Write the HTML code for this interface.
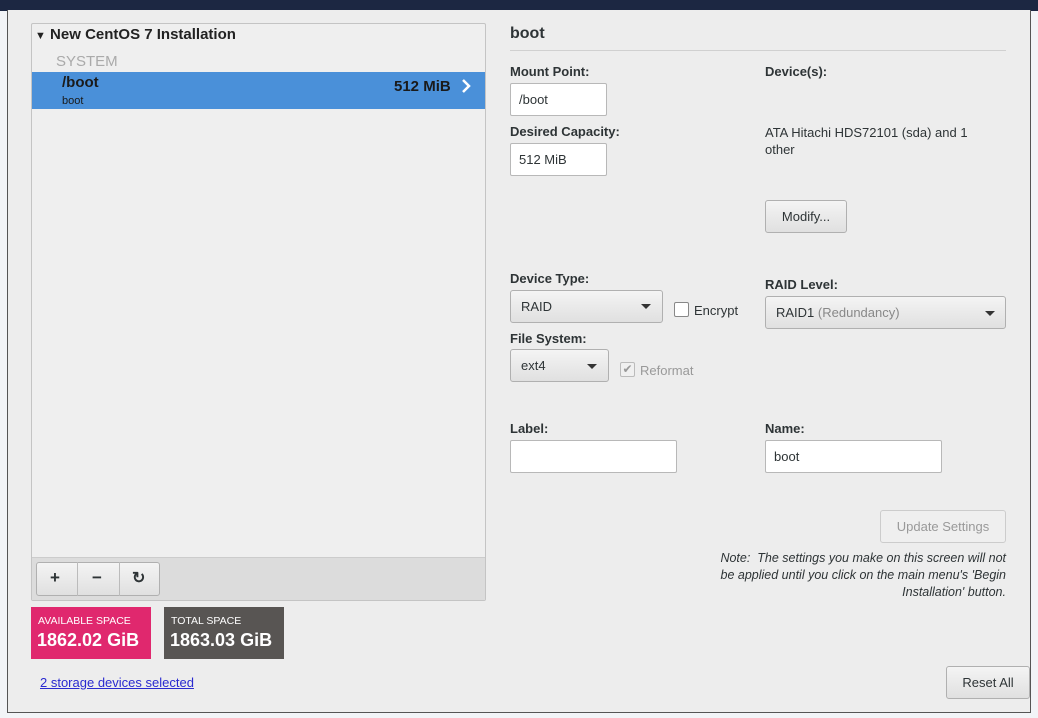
<!DOCTYPE html>
<html><head><meta charset="utf-8"><style>
*{box-sizing:border-box;margin:0;padding:0}
body{width:1038px;height:718px;overflow:hidden;background:#f2f4f7;font-family:"Liberation Sans",sans-serif;font-size:13px;color:#2e3436;position:relative}
.top{position:absolute;left:0;top:0;width:1038px;height:11px;background:#1c2742}
.win{position:absolute;left:7px;top:10px;width:1024px;height:703px;background:#ededed;border:1px solid #555;border-top:none}
.a{position:absolute;white-space:nowrap}
.lbl{font-weight:bold;font-size:13px;color:#2e3436}
.inp{position:absolute;background:#fff;border:1px solid #b8b8b8;border-radius:2px;padding-left:8px;font-size:13px;display:flex;align-items:center}
.btn{position:absolute;background:linear-gradient(#f4f4f4,#e0e0e0);border:1px solid #b0b0b0;border-radius:3px;display:flex;align-items:center;font-size:13px;white-space:nowrap}
.arr{position:absolute;width:0;height:0;border-left:5px solid transparent;border-right:5px solid transparent;border-top:5px solid #333}
</style></head><body>
<div class="top"></div>
<div class="win"></div>
<div class="a" style="left:31px;top:23px;width:455px;height:578px;border:1px solid #c4c4c4;border-radius:2px;background:#efefef"></div>
<div class="a" style="left:35px;top:26px;font-weight:bold;font-size:15px;color:#222"><span style="font-size:11px">▼</span> New CentOS 7 Installation</div>
<div class="a" style="left:56px;top:53px;font-size:15px;color:#aaa">SYSTEM</div>
<div class="a" style="left:32px;top:72px;width:453px;height:37px;background:#4a90d9"></div>
<div class="a" style="left:62px;top:74px;font-weight:bold;font-size:15px;color:#1a1a1a">/boot</div>
<div class="a" style="left:62px;top:95px;font-size:11px;color:#1a1a1a">boot</div>
<div class="a" style="left:394px;top:78px;font-weight:bold;font-size:15px;color:#1a1a1a">512 MiB</div>
<svg class="a" style="left:461px;top:79px" width="10" height="14"><path d="M2 1 L8 7 L2 13" stroke="#fff" stroke-width="2.5" fill="none"/></svg>
<div class="a" style="left:32px;top:557px;width:453px;height:43px;background:#dcdcdc;border-top:1px solid #ccc"></div>
<div class="btn" style="left:36px;top:562px;width:124px;height:34px;padding:0"></div>
<div class="a" style="left:77px;top:562px;width:1px;height:34px;background:#bbb"></div>
<div class="a" style="left:119px;top:562px;width:1px;height:34px;background:#bbb"></div>
<div class="a" style="left:50px;top:568px;font-weight:bold;font-size:17px">+</div>
<div class="a" style="left:92px;top:568px;font-weight:bold;font-size:17px">−</div>
<div class="a" style="left:132px;top:568px;font-weight:bold;font-size:16px">↻</div>
<div class="a" style="left:31px;top:607px;width:120px;height:52px;background:#e0286e;color:#fff">
<div style="position:absolute;left:7px;top:8px;font-size:10.5px">AVAILABLE SPACE</div>
<div style="position:absolute;left:6px;top:23px;font-size:18px;font-weight:bold;white-space:nowrap">1862.02 GiB</div></div>
<div class="a" style="left:164px;top:607px;width:120px;height:52px;background:#585553;color:#fff">
<div style="position:absolute;left:7px;top:8px;font-size:10.5px">TOTAL SPACE</div>
<div style="position:absolute;left:6px;top:23px;font-size:18px;font-weight:bold;white-space:nowrap">1863.03 GiB</div></div>
<div class="a" style="left:40px;top:675px;font-size:13px;color:#2a2ad0;text-decoration:underline">2 storage devices selected</div>
<div class="a lbl" style="left:510px;top:25px;font-size:16px">boot</div>
<div class="a" style="left:510px;top:50px;width:496px;height:1px;background:#d0d0d0"></div>
<div class="a lbl" style="left:510px;top:64px">Mount Point:</div>
<div class="inp" style="left:510px;top:83px;width:97px;height:33px">/boot</div>
<div class="a lbl" style="left:510px;top:124px">Desired Capacity:</div>
<div class="inp" style="left:510px;top:143px;width:97px;height:33px">512 MiB</div>
<div class="a lbl" style="left:765px;top:64px">Device(s):</div>
<div class="a" style="left:765px;top:124px;width:220px;line-height:17px;white-space:normal">ATA Hitachi HDS72101 (sda) and 1 other</div>
<div class="btn" style="left:765px;top:200px;width:82px;height:33px;justify-content:center">Modify...</div>
<div class="a lbl" style="left:510px;top:271px">Device Type:</div>
<div class="btn" style="left:510px;top:290px;width:153px;height:33px;padding-left:10px">RAID</div><div class="arr" style="left:641px;top:304px"></div>
<div class="a" style="left:674px;top:302px;width:15px;height:15px;border:1px solid #888;border-radius:2px;background:#fff"></div>
<div class="a" style="left:694px;top:303px">Encrypt</div>
<div class="a lbl" style="left:765px;top:277px">RAID Level:</div>
<div class="btn" style="left:765px;top:296px;width:241px;height:33px;padding-left:10px">RAID1&nbsp;<span style="color:#888">(Redundancy)</span></div><div class="arr" style="left:985px;top:311px"></div>
<div class="a lbl" style="left:510px;top:331px">File System:</div>
<div class="btn" style="left:510px;top:349px;width:99px;height:33px;padding-left:10px">ext4</div><div class="arr" style="left:587px;top:364px"></div>
<div class="a" style="left:620px;top:362px;width:15px;height:15px;border:1px solid #bbb;border-radius:2px;background:#f0f0f0;color:#999;font-size:12px;line-height:13px;text-align:center">✔</div>
<div class="a" style="left:640px;top:363px;color:#999">Reformat</div>
<div class="a lbl" style="left:510px;top:421px">Label:</div>
<div class="inp" style="left:510px;top:440px;width:167px;height:33px"></div>
<div class="a lbl" style="left:765px;top:421px">Name:</div>
<div class="inp" style="left:765px;top:440px;width:177px;height:33px">boot</div>
<div class="btn" style="left:880px;top:510px;width:126px;height:33px;justify-content:center;color:#999;background:#efefef;border-color:#ccc">Update Settings</div>
<div class="a" style="left:706px;top:550px;width:300px;text-align:right;font-style:italic;font-size:12.5px;line-height:17px;white-space:normal">Note:&nbsp; The settings you make on this screen will not be applied until you click on the main menu's 'Begin Installation' button.</div>
<div class="btn" style="left:946px;top:666px;width:84px;height:33px;justify-content:center">Reset All</div>
</body></html>
